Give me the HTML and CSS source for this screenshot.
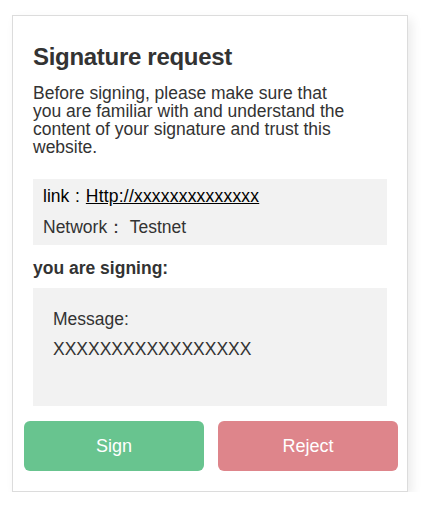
FILE: index.html
```html
<!DOCTYPE html>
<html>
<head>
<meta charset="utf-8">
<link rel="stylesheet" href="styles.css">
</head>
<body>
<div class="card">
  <div class="content">
    <h1 class="title">Signature request</h1>
    <p class="desc">Before signing, please make sure that<br>you are familiar with and understand the<br>content of your signature and trust this<br>website.</p>
    <div class="info">
      <div class="row link-row">link : <a class="link" href="#">Http://xxxxxxxxxxxxxx</a></div>
      <div class="row">Network： Testnet</div>
    </div>
    <div class="label">you are signing:</div>
    <div class="message">
      <div class="mline">Message:</div>
      <div class="mline">XXXXXXXXXXXXXXXXX</div>
    </div>
  </div>
  <div class="actions">
    <button class="btn sign">Sign</button>
    <button class="btn reject">Reject</button>
  </div>
</div>
</body>
</html>
```
FILE: styles.css
```css
html, body {
  margin: 0;
  padding: 0;
  background: #ffffff;
}
body {
  font-family: "Liberation Sans", Arial, sans-serif;
  color: #333333;
}
.card {
  box-sizing: border-box;
  margin: 15px 0 0 12px;
  width: 396px;
  height: 477px;
  border: 1px solid #dcdcdc;
  background: #fff;
  box-shadow: 4px 4px 10px rgba(0, 0, 0, 0.08);
  display: flex;
  flex-direction: column;
}
.content {
  padding: 0 20px;
}
.title {
  margin: 26px 0 0 0;
  font-size: 24px;
  line-height: 30px;
  font-weight: bold;
  color: #333;
  letter-spacing: -0.3px;
}
.desc {
  margin: 12px 0 0 0;
  font-size: 17.5px;
  line-height: 18px;
  white-space: nowrap;
}
.info {
  margin-top: 23px;
  background: #f2f2f2;
  padding: 2px 10px;
}
.row {
  font-size: 17.5px;
  line-height: 31px;
  color: #333;
}
.link-row {
  color: #000;
  word-spacing: 1px;
}
.link {
  color: #000;
  text-decoration: underline;
  letter-spacing: 0.2px;
}
.label {
  margin-top: 11px;
  font-size: 17.5px;
  line-height: 25px;
  font-weight: bold;
  color: #333;
}
.message {
  margin-top: 7px;
  background: #f2f2f2;
  height: 118px;
  box-sizing: border-box;
  padding: 16px 20px 0 20px;
}
.mline {
  font-size: 17.5px;
  line-height: 30px;
  color: #333;
}
.actions {
  display: flex;
  gap: 14px;
  padding: 15px 9px 0 11px;
}
.btn {
  flex: 1;
  height: 50px;
  border: none;
  border-radius: 6px;
  color: #fff;
  font-family: "Liberation Sans", Arial, sans-serif;
  font-size: 18px;
  padding: 0;
}
.sign {
  background: #68c48f;
}
.reject {
  background: #de858b;
}
```
